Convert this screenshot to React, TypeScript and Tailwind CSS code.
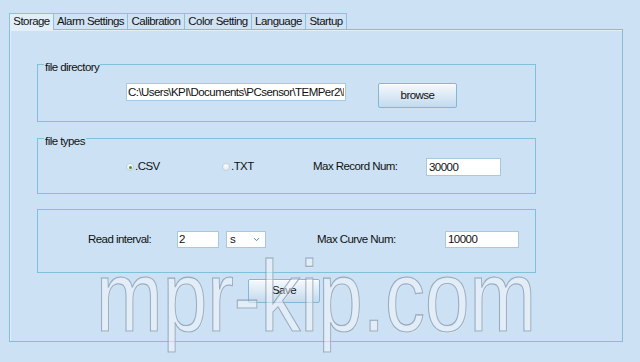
import { ChevronDown } from "lucide-react";

const tabs = [
  { label: "Storage", w: "w-[45px]", active: true },
  { label: "Alarm Settings", w: "w-[74px]", active: false },
  { label: "Calibration", w: "w-[57px]", active: false },
  { label: "Color Setting", w: "w-[67px]", active: false },
  { label: "Language", w: "w-[54px]", active: false },
  { label: "Startup", w: "w-[41px]", active: false },
];

function Radio({ checked }: { checked?: boolean }) {
  return (
    <span className="flex items-center justify-center w-[8px] h-[8px] rounded-full border border-[#c4ced8] bg-gradient-to-b from-[#ffffff] to-[#e4e9ee]">
      {checked && <span className="w-[3px] h-[3px] rounded-full bg-[#3f9a2e]" />}
    </span>
  );
}

export default function App() {
  return (
    <div className="relative w-[640px] h-[362px] overflow-hidden bg-[#cce1f4] pt-[13px] pl-[9px] font-['Liberation_Sans',Arial,sans-serif] text-[11.5px] tracking-[-0.55px] text-[#111]">
      {/* Tabs */}
      <div className="flex items-end h-[16px]">
        {tabs.map((t, i) => (
          <div
            key={t.label}
            className={`${t.w} flex items-center justify-center border-t border-r border-[#8ec2dc] ${
              i === 0 ? "border-l" : ""
            } ${
              t.active
                ? "relative z-10 h-[17px] -mb-px bg-[#e2eff9]"
                : "h-[16px] bg-[#cfe3f5]"
            }`}
          >
            {t.label}
          </div>
        ))}
      </div>

      {/* Panel */}
      <div className="w-[614px] h-[313px] border border-[#86bcd8] shadow-[inset_1px_1px_0_#e2eefa] px-[27px]">
        {/* file directory */}
        <fieldset className="mt-[24px] w-[499px] border border-[#7fc0dd]">
          <legend className="ml-[6px] px-[1px] pt-[6px] leading-[14px]">file directory</legend>
          <div className="flex items-start mt-[9px] pb-[13px]">
            <input
              readOnly
              defaultValue="C:\Users\KPI\Documents\PCsensor\TEMPer2\Data"
              className="ml-[88px] w-[220px] h-[18px] px-[1px] bg-white border border-[#a7c9de] outline-none text-[11.5px] tracking-[-0.55px]"
            />
            <button className="ml-[32px] w-[79px] h-[25px] rounded-[2px] border border-[#86b6d6] bg-gradient-to-b from-[#f6f9fc] to-[#c3daee] shadow-[inset_0_1px_0_#ffffff]">
              browse
            </button>
          </div>
        </fieldset>

        {/* file types */}
        <fieldset className="mt-[6px] w-[499px] border border-[#7fc0dd]">
          <legend className="ml-[6px] px-[1px] pt-[6px] leading-[14px]">file types</legend>
          <div className="flex items-center h-[18px] mt-[10px] mb-[17px]">
            <div className="ml-[88px] w-[96px] flex items-center gap-[1px]">
              <Radio checked />
              <span>.CSV</span>
            </div>
            <div className="w-[91px] flex items-center gap-[1px]">
              <Radio />
              <span>.TXT</span>
            </div>
            <span className="w-[113px]">Max Record Num:</span>
            <input
              readOnly
              defaultValue="30000"
              className="w-[75px] h-[18px] px-[2px] bg-white border border-[#a7c9de] outline-none text-[11.5px] tracking-[-0.55px]"
            />
          </div>
        </fieldset>

        {/* read interval */}
        <div className="mt-[15px] w-[499px] border border-[#7fc0dd] pt-[21px] pb-[24px]">
          <div className="flex items-center h-[17px]">
            <span className="ml-[50px] w-[89px]">Read interval:</span>
            <input
              readOnly
              defaultValue="2"
              className="w-[42px] h-[17px] px-[1px] bg-white border border-[#a7c9de] outline-none text-[11.5px] tracking-[-0.55px]"
            />
            <div className="ml-[7px] w-[40px] h-[17px] px-[3px] bg-white border border-[#a7c9de] flex items-center justify-between">
              <span>s</span>
              <ChevronDown size={9} strokeWidth={2.5} className="text-[#3b7fc4] mr-[1px]" />
            </div>
            <span className="ml-[51px] w-[128px]">Max Curve Num:</span>
            <input
              readOnly
              defaultValue="10000"
              className="w-[74px] h-[17px] px-[2px] bg-white border border-[#a7c9de] outline-none text-[11.5px] tracking-[-0.55px]"
            />
          </div>
        </div>

        <button className="mt-[6px] ml-[211px] w-[72px] h-[24px] rounded-[2px] border border-[#86b6d6] bg-gradient-to-b from-[#f6f9fc] to-[#c3daee] shadow-[inset_0_1px_0_#ffffff]">
          Save
        </button>
      </div>

      {/* watermark */}
      <div className="pointer-events-none absolute left-[96px] top-[246px] origin-left scale-x-[0.8] text-[100px] leading-none tracking-normal whitespace-nowrap text-[rgba(240,246,252,0.22)] [-webkit-text-stroke:1.2px_rgba(125,145,165,0.7)] [text-shadow:1px_1px_0_rgba(255,255,255,0.35)]">
        mpr-kip.com
      </div>
    </div>
  );
}
